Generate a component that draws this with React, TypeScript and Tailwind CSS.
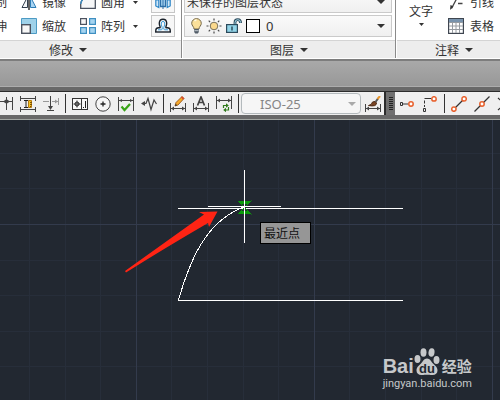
import type { ReactNode } from "react";
import clsx from "clsx";

function Caret({ className }: { className?: string }) {
  return (
    <svg width="8" height="4" viewBox="0 0 8 4" className={clsx("shrink-0", className)} aria-hidden="true">
      <path d="M0 0h8L4 4z" fill="currentColor" />
    </svg>
  );
}

function SmallCaret() {
  return (
    <svg width="5" height="3" viewBox="0 0 5 3" className="shrink-0" aria-hidden="true">
      <path d="M0 0h5L2.5 3z" fill="currentColor" />
    </svg>
  );
}

function Icon({ children }: { children: ReactNode }) {
  return (
    <svg
      width="16"
      height="16"
      viewBox="0 0 16 16"
      fill="none"
      stroke="#444"
      strokeWidth="1"
      className="shrink-0"
      aria-hidden="true"
    >
      {children}
    </svg>
  );
}

/* Ribbon icons */

const MirrorIcon = () => (
  <Icon>
    <path d="M6.5 3v10.5H1z" fill="#f4f6f8" stroke="#333f4d" />
    <path d="M8 0v16" stroke="#222" strokeWidth="1.4" />
    <path d="M9.5 3v10.5H15z" fill="#a9d5f3" stroke="#2d7cb5" />
  </Icon>
);

const ScaleIcon = () => (
  <Icon>
    <path d="M.5 .5h15v15H8v-8H.5z" fill="#9fd2ea" stroke="#4d9bc4" />
    <rect x=".7" y="6.7" width="8.6" height="8.6" fill="#f7f7f7" stroke="#4c5360" strokeWidth="1.4" />
  </Icon>
);

const FilletIcon = () => (
  <Icon>
    <path d="M.7 14.3V10Q1.5 4 7 3.5H15.3V14.3z" fill="#f6f7f8" stroke="#4a5260" strokeWidth="1.3" />
    <path d="M.7 10Q1.5 4 7 3.5" stroke="#3b8fc7" strokeWidth="1.3" />
  </Icon>
);

const ArrayIcon = () => (
  <Icon>
    <rect x=".6" y=".6" width="5.8" height="5.8" fill="#f7f7f7" stroke="#4c5360" strokeWidth="1.2" />
    <rect x="9.6" y=".6" width="5.8" height="5.8" fill="#a5d4f0" stroke="#3f8fc1" strokeWidth="1.2" />
    <rect x=".6" y="9.6" width="5.8" height="5.8" fill="#a5d4f0" stroke="#3f8fc1" strokeWidth="1.2" />
    <rect x="9.6" y="9.6" width="5.8" height="5.8" fill="#a5d4f0" stroke="#3f8fc1" strokeWidth="1.2" />
  </Icon>
);

const AlignIcon = () => (
  <Icon>
    <path d="M.8 6v6l3 1.5V6zM15.2 6v6l-3 1.5V6z" fill="#cfe6f7" stroke="#2d86c7" strokeWidth="1.2" />
    <path d="M5.5 4h5v8.5h-5z" fill="#a9d5f3" stroke="#2d6fa8" strokeWidth="1.3" />
    <path d="M8 3v12" stroke="#2d6fa8" />
  </Icon>
);

const OffsetIcon = () => (
  <Icon>
    <path
      d="M.8 14V12Q1 9.7 3.6 9.7H4.9Q5.4 9.7 5 8.6Q4.200 6.500 4.300 5Q4.600 1.300 8 1.300T11.700 5Q11.800 6.500 11 8.600Q10.600 9.700 11.100 9.700H12.400Q15 9.700 15.200 12V14"
      fill="#f4f8fa"
      stroke="#1b222b"
      strokeWidth="1.4"
    />
    <path d="M0 14h16" stroke="#1b222b" strokeWidth="1.4" />
    <path d="M3 11.8h3.5Q7.5 11.500 7.200 9.500Q6 6.500 6.300 5Q6.700 3.400 8 3.400T9.700 5Q10 6.500 8.800 9.500Q8.500 11.500 9.500 11.800H13" stroke="#3a9bd9" />
  </Icon>
);

const BulbIcon = () => (
  <svg width="11" height="16" viewBox="0 0 11 16" className="shrink-0" aria-hidden="true">
    <path
      d="M5.5 .6a4.8 4.8 0 0 0-4.8 4.7C.7 7.8 3 8.6 3 11h5c0-2.4 2.300-3.200 2.300-5.700A4.800 4.800 0 0 0 5.500 .6z"
      fill="#fbe09a"
      stroke="#75684a"
    />
    <path d="M3.5 3Q4.5 2 5.5 2" stroke="#fffbe6" strokeWidth="1.4" fill="none" />
    <path d="M3.2 11h4.6v3l-1 1.5H4.2l-1-1.5z" fill="#525d68" />
    <path d="M3.5 12.7h4" stroke="#c5ccd2" />
  </svg>
);

const SunIcon = () => (
  <Icon>
    <circle cx="8" cy="8" r="3.8" fill="#fbd98d" stroke="#77705c" />
    <path
      d="M8 .5v2M8 13.5v2M.5 8h2M13.5 8h2M2.7 2.7l1.4 1.4M11.9 11.9l1.4 1.4M2.7 13.3l1.4-1.4M11.9 4.1l1.4-1.4"
      stroke="#4a4a4a"
      strokeWidth="1.2"
    />
  </Icon>
);

const UnlockIcon = () => (
  <Icon>
    <path d="M9 7V4.500Q9 1.700 11.800 1.700T14.600 5" stroke="#2c4a5c" strokeWidth="2.800" />
    <path d="M9 7V4.500Q9 1.700 11.800 1.700T14.600 4.600" stroke="#a5d9ea" />
    <rect x=".6" y="6.6" width="10.8" height="7.8" fill="#92d4e8" stroke="#2c4a5c" strokeWidth="1.2" />
    <path d="M6 8.5v4" stroke="#24404f" strokeWidth="1.4" />
  </Icon>
);

const LeaderIcon = () => (
  <Icon>
    <path d="M3.5 14.5L8.5 5M10 9.5h4.500" strokeWidth="1.3" />
    <path d="M2 16l.5-5 3 1.6z" fill="#333" stroke="none" />
  </Icon>
);

const TableIcon = () => (
  <Icon>
    <rect x=".6" y=".6" width="14.8" height="14.8" fill="#fff" stroke="#3f4650" strokeWidth="1.2" />
    <path d="M1 1h14v3H1z" fill="#7893ad" stroke="none" />
    <path d="M1 4.5h14M1 8h14M1 11.5h14M4.5 4v11M8 4v11M11.5 4v11" stroke="#969ba1" />
  </Icon>
);

/* Dimension toolbar icons */

const ContinueIcon = () => (
  <Icon>
    <path d="M2.5 1v13M9.5 1v13M15.5 1v13M0 5.5h15" />
    <path d="M9 3.5v4l-3-2zM10 3.5v4l3-2z" fill="#444" stroke="none" />
  </Icon>
);

const SpaceIcon = () => (
  <Icon>
    <path d="M.5 0v5M15.5 0v5M.5 11v5M15.5 11v5M1 2.5h14M1 13.5h14" />
    <path d="M4 4.500h4M4 11.500h4M6 5v7" stroke="#222" />
    <path d="M8.5 4.5h3v7h-3z" fill="#f8c51f" stroke="#b47a10" />
    <path d="M10 6.5h2M10 8.5h2M10 10.500h1" stroke="#7a4e08" />
  </Icon>
);

const BreakIcon = () => (
  <Icon>
    <path d="M0 5.5h6M9 5.5h6M15.5 2v7" stroke="#999" />
    <path d="M7.5 0v13M4 14.5h7" />
    <path d="M5 10h5l-2.5 4z" fill="#444" stroke="none" />
    <path d="M12 3.5v4l3-2z" fill="#999" stroke="none" />
  </Icon>
);

const ToleranceIcon = () => (
  <Icon>
    <rect x=".5" y="2.5" width="15" height="11" fill="#f8f8f8" stroke="#333" />
    <path d="M9.5 3v10M1.5 8h7M5 4.5v7" stroke="#333" />
    <circle cx="5" cy="8" r="2" stroke="#222" />
    <path d="M11 11.500h1M13.5 5v7" stroke="#222" />
  </Icon>
);

const CenterMarkIcon = () => (
  <Icon>
    <circle cx="8" cy="8" r="7.2" fill="#f5f5f5" />
    <path d="M8 5.500v5M5.500 8h5" stroke="#222" strokeWidth="1.3" />
  </Icon>
);

const InspectIcon = () => (
  <Icon>
    <path d="M.5 1v14M15.5 1v14M1 4.5h14" />
    <path d="M1 4.5l3-1.5v3zM15 4.5l-3-1.5v3z" fill="#444" stroke="none" />
    <path d="M3.500 10.5l3 3.5 5.5-6" stroke="#39a417" strokeWidth="2.2" />
  </Icon>
);

const JogIcon = () => (
  <Icon>
    <path d="M1 7.5h4L7 2.5l3 11L13 4l2.5 4" strokeWidth="1.2" />
    <path d="M0 7.5l4-2.5v5z" fill="#444" stroke="none" />
  </Icon>
);

const DimBase = () => (
  <>
    <path d="M.5 7v9M15.5 7v9M1 12.5h14" />
    <path d="M1 12.5l3-2v4zM15 12.5l-3-2v4z" fill="#444" stroke="none" />
  </>
);

const DimEditIcon = () => (
  <Icon>
    <DimBase />
    <path d="M5 10l1-3.5L12 .5l2 2L8 9z" fill="#f6a928" stroke="#8a4a12" strokeWidth=".8" />
    <path d="M11 1.5l1-1.2 2.2 2-1.2 1.2z" fill="#d9472d" stroke="none" />
    <path d="M5 10l.7-2.2L7.2 9.3z" fill="#333" stroke="none" />
  </Icon>
);

const DimTextIcon = () => (
  <Icon>
    <DimBase />
    <path d="M4.5 9.5L8 1l3.5 8.5M5.8 6.5h4.4" strokeWidth="1.7" />
  </Icon>
);

const DimUpdateIcon = () => (
  <Icon>
    <path d="M.5 0v13M15.5 0v13M1 4.5h14" />
    <path d="M1 4.5l3-2v4zM15 4.5l-3-2v4z" fill="#444" stroke="none" />
    <path d="M7.5 12V9.5h3M12.5 11v3h-3" stroke="#2f7a1b" strokeWidth="1.2" />
    <path d="M10 7.300l2.800 2.200-2.800 2.200zM10 11.800L7.200 14l2.800 2.200z" fill="#2f7a1b" stroke="none" />
  </Icon>
);

const DimStyleIcon = () => (
  <Icon>
    <path d="M.5 8v8M15.5 8v8M1 12.5h14" />
    <path d="M1 12.5l3-2v4zM15 12.5l-3-2v4z" fill="#444" stroke="none" />
    <path d="M3.500 9.5Q7 9 7.500 6q3-1.500 4 1Q11.500 11 3.500 9.5z" fill="#7a4424" stroke="#4e2a14" />
    <path d="M10.500 6l2.500-3.500" stroke="#555" strokeWidth="2" />
    <path d="M12.5 3L15 0" stroke="#e8962c" strokeWidth="2" />
  </Icon>
);

/* Object snap icons */

const TrackIcon = () => (
  <Icon>
    <path d="M1.5 6.5h2v3h-2zM4 8h5.500" stroke="#333" />
    <circle cx="12" cy="8" r="2.200" fill="#fff" stroke="#e8602c" strokeWidth="1.5" />
  </Icon>
);

const SnapFromIcon = () => (
  <Icon>
    <path d="M9.500 2.500H2.500V11" stroke="#333" strokeDasharray="7 2 3 1.5" />
    <path d="M1.5 12.5h2v3h-2z" stroke="#333" />
    <circle cx="12" cy="2.9" r="2.200" fill="#fff" stroke="#e8602c" strokeWidth="1.5" />
  </Icon>
);

const EndpointIcon = () => (
  <Icon>
    <path d="M3 13L13 3" stroke="#333" strokeWidth="1.2" />
    <circle cx="2.9" cy="13.1" r="2.2" fill="#fff" stroke="#e8602c" strokeWidth="1.5" />
    <circle cx="13.1" cy="2.9" r="2.2" fill="#fff" stroke="#e8602c" strokeWidth="1.5" />
  </Icon>
);

const MidpointIcon = () => (
  <Icon>
    <path d="M.5 15.5l15-15" stroke="#333" strokeWidth="1.2" />
    <circle cx="8" cy="8" r="2.2" fill="#fff" stroke="#e8602c" strokeWidth="1.5" />
  </Icon>
);

const IntersectionIcon = () => (
  <Icon>
    <path d="M1 2l14 12M1 14L15 2" stroke="#333" strokeWidth="1.2" />
  </Icon>
);

function ToolButton({ label, children }: { label: string; children: ReactNode }) {
  return (
    <button type="button" aria-label={label} className="flex h-full w-[23px] shrink-0 items-center justify-center">
      {children}
    </button>
  );
}

function Separator() {
  return (
    <div className="flex w-1.5 shrink-0 justify-center">
      <div className="my-0.5 w-px bg-[#333]" />
    </div>
  );
}

function PanelTitle({ className, children }: { className?: string; children: ReactNode }) {
  return (
    <button
      type="button"
      className={clsx("flex h-[18px] w-full items-center gap-1.5 border-t border-[#d4d4d4] bg-[#ededed]", className)}
    >
      {children}
      <Caret />
    </button>
  );
}

function ModifyRow({
  cut,
  first,
  second,
  tool,
}: {
  cut: string;
  first: ReactNode;
  second: ReactNode;
  tool: ReactNode;
}) {
  return (
    <div className="flex h-[22px] shrink-0 items-center">
      <button type="button" className="flex w-[7px] justify-end overflow-hidden">
        <span className="shrink-0">{cut}</span>
      </button>
      <button type="button" className="ml-3.5 flex w-[59px] items-center gap-[5px]">
        {first}
      </button>
      <button type="button" className="flex items-center gap-[5px]">
        {second}
      </button>
      <button type="button" aria-label="下拉" className="flex w-[26px] pl-2">
        <SmallCaret />
      </button>
      {tool}
    </div>
  );
}

function FrameButton({ label, children }: { label: string; children: ReactNode }) {
  return (
    <button
      type="button"
      aria-label={label}
      className="flex h-[22px] w-6 items-center justify-center border border-[#c6c6c6] bg-[#f7f7f7]"
    >
      {children}
    </button>
  );
}

const comboBox =
  "flex h-[22px] shrink-0 items-center border border-[#cacaca] bg-gradient-to-b from-[#fafafa] to-[#f0f0f0] pr-1.5";

function Ribbon() {
  return (
    <header className="flex border-b border-white bg-white leading-4">
      <section className="w-[182px] shrink-0 border-r border-[#8a8a8a]">
        <div className="flex h-10 flex-col justify-end gap-0.5 overflow-hidden pb-[3px]">
          <ModifyRow
            cut="复制"
            first={<><MirrorIcon />镜像</>}
            second={<><FilletIcon />圆角</>}
            tool={<FrameButton label="对齐"><AlignIcon /></FrameButton>}
          />
          <ModifyRow
            cut="拉伸"
            first={<><ScaleIcon />缩放</>}
            second={<><ArrayIcon />阵列</>}
            tool={<FrameButton label="偏移"><OffsetIcon /></FrameButton>}
          />
        </div>
        <PanelTitle className="pl-[49px]">修改</PanelTitle>
      </section>

      <section className="w-[214px] shrink-0 border-r border-[#8a8a8a] pl-px">
        <div className="flex h-10 flex-col justify-end gap-0.5 overflow-hidden pr-[3px] pb-[3px] pl-px">
          <div className={comboBox}>
            <select aria-label="图层状态" className="min-w-0 flex-1 appearance-none bg-transparent pl-0.5">
              <option>未保存的图层状态</option>
            </select>
            <Caret />
          </div>
          <div className={clsx(comboBox, "pl-1.5")}>
            <div className="flex items-center gap-1">
              <BulbIcon />
              <SunIcon />
              <UnlockIcon />
              <span className="size-3.5 border border-black bg-white" />
            </div>
            <select
              aria-label="图层"
              className="min-w-0 flex-1 appearance-none bg-transparent pl-1.5 font-['Noto_Sans',sans-serif] text-[13px]"
            >
              <option>0</option>
            </select>
            <Caret />
          </div>
        </div>
        <PanelTitle className="justify-center">图层</PanelTitle>
      </section>

      <section className="min-w-0 flex-1 pl-px">
        <div className="flex h-10 items-end gap-[15px] overflow-hidden pb-[3px] pl-3">
          <button type="button" className="flex shrink-0 flex-col items-center gap-1 pb-[11px]">
            文字
            <SmallCaret />
          </button>
          <div className="flex shrink-0 flex-col gap-0.5">
            <button type="button" className="flex h-[22px] items-center gap-1.5">
              <LeaderIcon />
              引线
            </button>
            <button type="button" className="flex h-[22px] items-center gap-1.5">
              <TableIcon />
              表格
            </button>
          </div>
        </div>
        <PanelTitle className="pl-[38px]">注释</PanelTitle>
      </section>
    </header>
  );
}

function Toolbars() {
  return (
    <div className="border-t border-[#adadad] bg-[#696969] py-1">
      <div className="flex h-6 overflow-hidden border-t border-[#2c2c2c] bg-[#efefef]">
        <div className="flex shrink-0 items-stretch border-r-2 border-[#2c2c2c]">
          <button
            type="button"
            aria-label="连续标注"
            className="flex w-4 shrink-0 items-center justify-end overflow-hidden pr-[3px]"
          >
            <ContinueIcon />
          </button>
          <ToolButton label="等距标注"><SpaceIcon /></ToolButton>
          <ToolButton label="折断标注"><BreakIcon /></ToolButton>
          <Separator />
          <ToolButton label="公差"><ToleranceIcon /></ToolButton>
          <ToolButton label="圆心标记"><CenterMarkIcon /></ToolButton>
          <ToolButton label="检验"><InspectIcon /></ToolButton>
          <ToolButton label="折弯线性"><JogIcon /></ToolButton>
          <Separator />
          <ToolButton label="编辑标注"><DimEditIcon /></ToolButton>
          <ToolButton label="编辑标注文字"><DimTextIcon /></ToolButton>
          <ToolButton label="标注更新"><DimUpdateIcon /></ToolButton>
          <Separator />
          <div className="my-px flex w-[120px] items-center rounded-sm border border-[#b4babd] bg-[#f6f6f6] pr-1 text-[#aaa]">
            <select
              aria-label="标注样式"
              className="min-w-0 flex-1 appearance-none bg-transparent pl-[18px] font-['Noto_Sans',sans-serif] text-[13px] leading-4 text-[#858585]"
            >
              <option>ISO-25</option>
            </select>
            <Caret />
          </div>
          <ToolButton label="标注样式管理"><DimStyleIcon /></ToolButton>
        </div>

        <div className="flex w-[9px] shrink-0 items-center justify-center bg-[#707070]">
          <div className="h-3.5 w-1 bg-[repeating-linear-gradient(#222_0_1px,#707070_1px_2px)]" />
        </div>

        <div className="flex min-w-0 flex-1">
          <ToolButton label="临时追踪点"><TrackIcon /></ToolButton>
          <ToolButton label="捕捉自"><SnapFromIcon /></ToolButton>
          <Separator />
          <ToolButton label="端点"><EndpointIcon /></ToolButton>
          <ToolButton label="中点"><MidpointIcon /></ToolButton>
          <ToolButton label="交点"><IntersectionIcon /></ToolButton>
        </div>
      </div>
    </div>
  );
}

function Watermark() {
  return (
    <div className="absolute right-7 bottom-2 flex flex-col text-[#c6c8ca]">
      <div className="flex items-end">
        <span className="font-['Liberation_Sans',sans-serif] text-[20px] leading-5 font-bold">Bai</span>
        <svg width="26" height="28" viewBox="0 0 26 28" fill="currentColor" aria-hidden="true">
          <ellipse cx="3.5" cy="11" rx="3" ry="4" />
          <ellipse cx="9.5" cy="4.5" rx="3" ry="4.2" />
          <ellipse cx="17.5" cy="4.5" rx="3" ry="4.2" transform="rotate(8 17.5 4.5)" />
          <ellipse cx="22.5" cy="12" rx="3" ry="4" />
          <path d="M13 10.5c-3 0-4.2 3-6 5-2 2.2-4.5 3.5-4.5 7 0 3.2 2.5 4.8 5.5 4.5 2-.2 3-.3 5-.3s3 .1 5 .3c3 .3 5.500-1.300 5.500-4.500 0-3.500-2.500-4.800-4.500-7-1.800-2-3-5-6-5z" />
          <text
            x="13"
            y="25"
            textAnchor="middle"
            fill="#222831"
            className="font-['Liberation_Sans',sans-serif] text-[13px] font-bold"
          >
            du
          </text>
        </svg>
        <span className="pl-0.5 text-[15px] leading-5 font-bold">经验</span>
      </div>
      <span className="font-[Roboto,sans-serif] text-[11px] leading-4">jingyan.baidu.com</span>
    </div>
  );
}

function DrawingArea() {
  return (
    <main className="relative min-h-64 flex-1 overflow-hidden border-t border-[#a3a7a3] bg-[#222831]">
      <svg width="100%" height="100%" className="absolute inset-0" role="img" aria-label="绘图区">
        <defs>
          <pattern id="grid" x="136" y="104" width="178" height="178" patternUnits="userSpaceOnUse">
            <path
              d="M35.5 0v178M71.5 0v178M107.5 0v178M142.5 0v178M0 36.5h178M0 71.5h178M0 107.5h178M0 142.5h178"
              stroke="#272e3a"
              fill="none"
            />
            <path d="M.5 0v178M0 .5h178" stroke="#333b4c" fill="none" />
          </pattern>
        </defs>
        <rect width="100%" height="100%" fill="url(#grid)" />
        <g fill="none" stroke="#fff" shapeRendering="crispEdges">
          <path d="M178 88.5h225M178 180.5h225" />
          <path d="M178.5 180C190 140 206 101 244 87" />
        </g>
        {/* nearest-point snap marker */}
        <g stroke="#0a9a0a" fill="#0a9a0a">
          <path d="M238 81h13l-3 3h-7zM238 94h13l-3-3h-7z" stroke="none" />
          <path d="M238.5 81.5l13 13M251.5 80.5l-13 13" />
        </g>
        <path d="M208 86.5h73M244.5 50v73" stroke="#fff" shapeRendering="crispEdges" />
        <path d="M125 151L204 94.5L199 92L217.5 91.5L209 107L208 103Q165 128 126 152.5Z" fill="#ff2414" />
      </svg>
      <div className="absolute top-[102px] left-[260px] flex h-[22px] w-[51px] items-center border border-black bg-[#969696] pl-[3px] leading-4 text-[#111]">
        最近点
      </div>
      <Watermark />
    </main>
  );
}

export default function App() {
  return (
    <div className="flex min-h-screen flex-col overflow-hidden bg-[#222831] font-['Noto_Sans_CJK_SC',sans-serif] text-[12px] text-[#333]">
      <Ribbon />
      <div className="h-[27px] border-t-2 border-[#7d7d7d] bg-gradient-to-b from-[#a9a9a9] to-[#989898]" />
      <Toolbars />
      <DrawingArea />
    </div>
  );
}
